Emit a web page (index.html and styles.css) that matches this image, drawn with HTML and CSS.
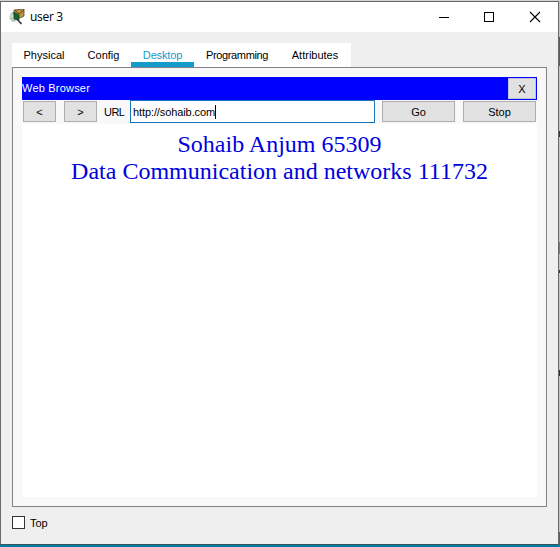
FILE: index.html
```html
<!DOCTYPE html>
<html lang="en">
<head>
<meta charset="utf-8">
<title>user 3</title>
<link rel="stylesheet" href="styles.css">
</head>
<body>
<div class="window">
  <header class="titlebar">
    <svg class="app-icon" width="16" height="16" viewBox="0 0 16 16">
      <ellipse cx="5" cy="8" rx="4.7" ry="5" fill="#c8d8ca"/>
      <path d="M2 5l3-2M1 9l3 1M3 12l3-1" stroke="#9dbba5"/>
      <path d="M5 1l10-1v7l-4 2-6-3z" fill="#bd9540" stroke="#5d421b" stroke-width=".8"/>
      <path d="M6 1l4 4 5-4" fill="none" stroke="#654515"/>
      <path d="M5 3l5 3v5l-5-1z" fill="#12672d" stroke="#123d20" stroke-width=".7"/>
      <path d="M8 10l4.500 5" stroke="#333" stroke-width="1.600"/>
    </svg>
    <span class="title">user 3</span>
    <svg class="controls" width="106" height="12" viewBox="0 0 106 12" fill="none" stroke="#000">
      <path d="M2 6.500h10"/>
      <rect x="47.500" y="1.500" width="9" height="9"/>
      <path d="M93 1l10 10M103 1L93 11" stroke-width="1.100"/>
    </svg>
  </header>
  <nav class="tabs">
    <span class="tab physical">Physical</span>
    <span class="tab config">Config</span>
    <span class="tab desktop">Desktop</span>
    <span class="tab programming">Programming</span>
    <span class="tab attributes">Attributes</span>
  </nav>
  <main class="panel">
    <div class="browser">
      <div class="browser-title"><span>Web Browser</span><button class="close">X</button></div>
      <div class="toolbar">
        <button class="step">&lt;</button>
        <button class="step">&gt;</button>
        <span class="url-label">URL</span>
        <div class="address"><span>http://sohaib.com</span><i class="caret"></i></div>
        <button class="action">Go</button>
        <button class="action">Stop</button>
      </div>
      <div class="page">
        <div class="name">Sohaib Anjum 65309</div>
        <div class="course">Data Communication and networks 111732</div>
      </div>
    </div>
  </main>
  <label class="top"><span class="box"></span><span>Top</span></label>
</div>
<div class="backdrop"><i class="teal"></i><i class="mark first"></i><i class="green"></i><i class="mark second"></i><i class="mark third"></i><i class="teal low"></i></div>
</body>
</html>
```
FILE: styles.css
```css
* { box-sizing: border-box; }
body {
  margin: 0;
  width: 560px;
  height: 547px;
  padding-top: 1px;
  display: flex;
  overflow: hidden;
  background: linear-gradient(#d0d3d2 0 1px, transparent 1px 545px, #087ba3 545px);
  font: 11px/14px "Liberation Sans", sans-serif;
  color: #000;
}
.window {
  width: 559px;
  height: 544px;
  border: 1px solid #666b6d;
  border-bottom-color: #305762;
  background: #efefef;
}
.titlebar {
  height: 30px;
  padding: 0 15px 0 8px;
  display: flex;
  align-items: center;
  background: #fff;
}
.app-icon { margin: -1px 5px 0 0; }
.title { font: 12px/16px "Open Sans", "Noto Sans", sans-serif; letter-spacing: -.3px; margin-top: -1px; }
.controls { margin: -1px 0 0 auto; }
.tabs {
  width: 339px;
  height: 24px;
  margin: 11px 0 0 11px;
  display: flex;
  background: #fff;
}
.tab { height: 24px; line-height: 25px; text-align: center; white-space: nowrap; }
.physical { width: 64px; }
.config { width: 55px; }
.desktop { width: 63px; color: #149bcc; border-bottom: 5px solid #149bcc; letter-spacing: -.15px; }
.programming { width: 85px; padding-left: 1px; letter-spacing: -.35px; }
.attributes { width: 72px; }
.panel {
  width: 535px;
  height: 440px;
  margin-left: 11px;
  border: 1px solid #808486;
  padding: 9px;
  background: #f8f8f8;
}
.browser { width: 515px; height: 420px; background: #fff; }
.browser-title {
  height: 23px;
  display: flex;
  align-items: center;
  justify-content: space-between;
  padding-right: 1px;
  background: #00f;
  color: #fff;
}
.browser-title span { letter-spacing: .2px; margin-top: -2px; }
button {
  padding: 0;
  border: 1px solid #adadad;
  background: #e1e1e1;
  font: inherit;
  color: #000;
}
.close { width: 28px; height: 21px; border-color: #c1c1d7; }
.toolbar { height: 24px; display: flex; align-items: flex-start; padding-left: 1px; background: #f8f8f8; }
.toolbar button { height: 21px; margin-top: 1px; }
.toolbar .step { width: 33px; margin-right: 8px; }
.url-label { width: 26px; line-height: 24px; margin-left: -1px; letter-spacing: -.55px; }
.address {
  width: 245px;
  height: 23px;
  padding-left: 2px;
  display: flex;
  align-items: center;
  border: 1px solid #1675bf;
  background: #fff;
}
.address span { letter-spacing: -.1px; }
.caret { width: 1px; height: 14px; background: #000; }
.toolbar .action { width: 73px; margin-left: 7px; }
.toolbar .action + .action { margin-left: 8px; }
.page {
  height: 373px;
  padding-top: 7px;
  text-align: center;
  font: 24px/27px "Liberation Serif", serif;
  color: #0000dc;
  white-space: nowrap;
}
.top { display: flex; align-items: center; gap: 5px; margin: 9px 0 0 11px; width: 60px; }
.box { width: 13px; height: 13px; margin-top: -1px; border: 1px solid #333; background: #fff; }
.backdrop { width: 1px; height: 546px; display: flex; flex-direction: column; background: #bfc5c6; }
.teal { height: 29px; margin-top: 36px; background: #087f96; }
.mark { height: 6px; background: #333; }
.first { margin-top: 65px; }
.green { height: 12px; margin-top: 105px; background: #4d9a47; }
.second { height: 3px; margin-top: 16px; }
.third { margin-top: 97px; }
.low { height: 15px; margin-top: 156px; }
```
